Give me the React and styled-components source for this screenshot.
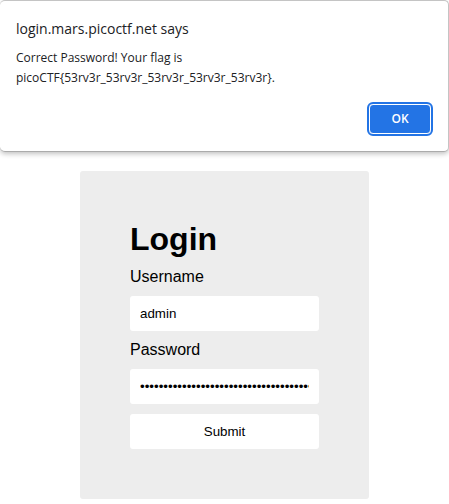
import React from "react";
import styled, { createGlobalStyle } from "styled-components";

const GlobalStyle = createGlobalStyle`
  *, *::before, *::after { box-sizing: border-box; }
  body {
    margin: 0;
    background: #fff;
    color: #000;
    font-family: "Liberation Sans", Arial, sans-serif;
  }
`;

const Page = styled.div`
  display: flex;
  flex-direction: column;
  gap: 19px;
  padding-bottom: 5px;
`;

const Alert = styled.section`
  display: flex;
  flex-direction: column;
  padding: 18px 17px 17px 16px;
  border: 1px solid #c4c4c4;
  border-left: 0;
  border-bottom-color: #ababab;
  border-radius: 5px;
  box-shadow: 0 2px 5px rgba(0, 0, 0, 0.24);
  background: #fff;
  color: #202124;
  font-family: "Open Sans", "Noto Sans", sans-serif;
`;

const AlertTitle = styled.h2`
  margin: 0 0 9px;
  font-size: 14px;
  font-weight: 400;
  line-height: 20px;
`;

const AlertText = styled.p`
  margin: 0 0 16px;
  font-size: 12px;
  line-height: 20px;
`;

const OkButton = styled.button`
  align-self: flex-end;
  width: 62px;
  height: 30px;
  padding: 0;
  border: 1px solid #fff;
  border-radius: 4px;
  outline: 2px solid #2374e5;
  background: #2374e5;
  color: #fff;
  font: 600 12px/20px "Open Sans", "Noto Sans", sans-serif;
`;

const LoginForm = styled.form`
  display: flex;
  flex-direction: column;
  align-self: center;
  padding: 50px;
  border-radius: 3px;
  background: #ededed;
`;

const Heading = styled.h1`
  margin: 0 0 10px;
  font-size: 32px;
  line-height: 37px;
`;

const Label = styled.label`
  margin-bottom: 10px;
  font-size: 16px;
  line-height: 18px;
`;

const Input = styled.input`
  width: 189px;
  height: 35px;
  margin: 0 0 10px;
  padding: 10px;
  border: 0;
  border-radius: 3px;
  outline: 0;
  background: #fff;
  color: #000;
  font-family: "Liberation Sans", Arial, sans-serif;
`;

const SubmitButton = styled.button`
  height: 35px;
  padding: 10px;
  border: 0;
  border-radius: 3px;
  background: #fff;
  color: #000;
  font-family: "Liberation Sans", Arial, sans-serif;
`;

export default function App() {
  return (
    <Page>
      <GlobalStyle />
      <Alert role="alertdialog" aria-labelledby="alert-title" aria-describedby="alert-text">
        <AlertTitle id="alert-title">login.mars.picoctf.net says</AlertTitle>
        <AlertText id="alert-text">
          Correct Password! Your flag is
          <br />
          picoCTF&#123;53rv3r_53rv3r_53rv3r_53rv3r_53rv3r&#125;.
        </AlertText>
        <OkButton type="button">OK</OkButton>
      </Alert>
      <LoginForm onSubmit={(event) => event.preventDefault()}>
        <Heading>Login</Heading>
        <Label htmlFor="username">Username</Label>
        <Input id="username" type="text" defaultValue="admin" />
        <Label htmlFor="password">Password</Label>
        <Input
          id="password"
          type="password"
          defaultValue="picoCTF{53rv3r_53rv3r_53rv3r_53rv3r_53rv3r}"
        />
        <SubmitButton type="submit">Submit</SubmitButton>
      </LoginForm>
    </Page>
  );
}
